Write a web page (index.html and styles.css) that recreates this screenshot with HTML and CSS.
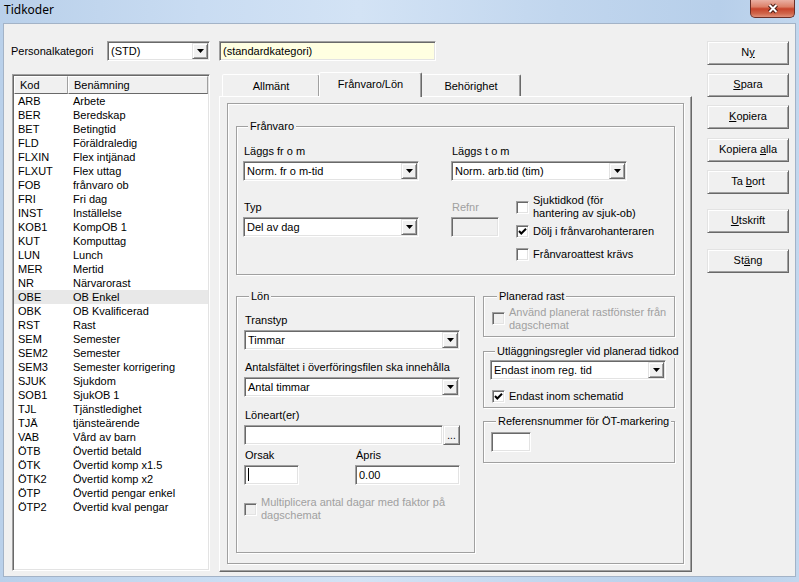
FILE: index.html
```html
<!DOCTYPE html>
<html lang="sv">
<head>
<meta charset="utf-8">
<title>Tidkoder</title>
<link rel="stylesheet" href="styles.css">
</head>
<body>
<div class="window">
  <div class="titlebar">
    <span class="title">Tidkoder</span>
    <div class="close">
      <svg width="14" height="11" viewBox="0 0 14 11"><path d="M3.5 2 L10.5 9 M10.5 2 L3.5 9" stroke="#4a1a12" stroke-width="4"/><path d="M3.5 2 L10.5 9 M10.5 2 L3.5 9" stroke="#fff" stroke-width="2"/></svg>
    </div>
  </div>
  <div class="client">
    <div class="toprow">
      <span class="plabel">Personalkategori</span>
      <div class="combo combo-std"><span class="val">(STD)</span><span class="drop"><svg width="7" height="4" viewBox="0 0 7 4"><polygon points="0,0 7,0 3.5,4" fill="#000"/></svg></span></div>
    </div>
    <div class="topmid"><div class="edit yellow">(standardkategori)</div></div>

    <div class="buttons">
      <div class="btn">N<u>y</u></div>
      <div class="btn"><u>S</u>para</div>
      <div class="btn"><u>K</u>opiera</div>
      <div class="btn btn-k2">Kopiera <u>a</u>lla</div>
      <div class="btn">Ta <u>b</u>ort</div>
      <div class="btn btn-u"><u>U</u>tskrift</div>
      <div class="btn btn-s">St<u>ä</u>ng</div>
    </div>

    <div class="listbox">
      <div class="lhead"><div class="hc hc-k">Kod</div><div class="hc hc-n">Benämning</div></div>
      <div class="lrow"><span class="k">ARB</span><span>Arbete</span></div>
      <div class="lrow"><span class="k">BER</span><span>Beredskap</span></div>
      <div class="lrow"><span class="k">BET</span><span>Betingtid</span></div>
      <div class="lrow"><span class="k">FLD</span><span>Föräldraledig</span></div>
      <div class="lrow"><span class="k">FLXIN</span><span>Flex intjänad</span></div>
      <div class="lrow"><span class="k">FLXUT</span><span>Flex uttag</span></div>
      <div class="lrow"><span class="k">FOB</span><span>frånvaro ob</span></div>
      <div class="lrow"><span class="k">FRI</span><span>Fri dag</span></div>
      <div class="lrow"><span class="k">INST</span><span>Inställelse</span></div>
      <div class="lrow"><span class="k">KOB1</span><span>KompOB 1</span></div>
      <div class="lrow"><span class="k">KUT</span><span>Komputtag</span></div>
      <div class="lrow"><span class="k">LUN</span><span>Lunch</span></div>
      <div class="lrow"><span class="k">MER</span><span>Mertid</span></div>
      <div class="lrow"><span class="k">NR</span><span>Närvarorast</span></div>
      <div class="lrow hot"><span class="k">OBE</span><span>OB Enkel</span></div>
      <div class="lrow"><span class="k">OBK</span><span>OB Kvalificerad</span></div>
      <div class="lrow"><span class="k">RST</span><span>Rast</span></div>
      <div class="lrow"><span class="k">SEM</span><span>Semester</span></div>
      <div class="lrow"><span class="k">SEM2</span><span>Semester</span></div>
      <div class="lrow"><span class="k">SEM3</span><span>Semester korrigering</span></div>
      <div class="lrow"><span class="k">SJUK</span><span>Sjukdom</span></div>
      <div class="lrow"><span class="k">SOB1</span><span>SjukOB 1</span></div>
      <div class="lrow"><span class="k">TJL</span><span>Tjänstledighet</span></div>
      <div class="lrow"><span class="k">TJÄ</span><span>tjänsteärende</span></div>
      <div class="lrow"><span class="k">VAB</span><span>Vård av barn</span></div>
      <div class="lrow"><span class="k">ÖTB</span><span>Övertid betald</span></div>
      <div class="lrow"><span class="k">ÖTK</span><span>Övertid komp x1.5</span></div>
      <div class="lrow"><span class="k">ÖTK2</span><span>Övertid komp x2</span></div>
      <div class="lrow"><span class="k">ÖTP</span><span>Övertid pengar enkel</span></div>
      <div class="lrow"><span class="k">ÖTP2</span><span>Övertid kval pengar</span></div>
    </div>

    <div class="tabs">
      <div class="tabstrip">
        <div class="tab tab-1">Allmänt</div>
        <div class="tab tab-active">Frånvaro/Lön</div>
        <div class="tab tab-3">Behörighet</div>
      </div>
      <div class="panel">
        <div class="inner">
          <div class="group g-franvaro">
            <div class="gtitle">Frånvaro</div>
            <div class="frow frow-a">
              <div class="fld w176">
                <div class="lbl">Läggs fr o m</div>
                <div class="combo"><span class="val">Norm. fr o m-tid</span><span class="drop"><svg width="7" height="4" viewBox="0 0 7 4"><polygon points="0,0 7,0 3.5,4" fill="#000"/></svg></span></div>
              </div>
              <div class="fld w176 ml32">
                <div class="lbl">Läggs t o m</div>
                <div class="combo"><span class="val">Norm. arb.tid (tim)</span><span class="drop"><svg width="7" height="4" viewBox="0 0 7 4"><polygon points="0,0 7,0 3.5,4" fill="#000"/></svg></span></div>
              </div>
            </div>
            <div class="frow frow-b">
              <div class="fld w176 mt7">
                <div class="lbl">Typ</div>
                <div class="combo"><span class="val">Del av dag</span><span class="drop"><svg width="7" height="4" viewBox="0 0 7 4"><polygon points="0,0 7,0 3.5,4" fill="#000"/></svg></span></div>
              </div>
              <div class="fld w48 ml32 mt7">
                <div class="lbl dis">Refnr</div>
                <div class="edit disabled"></div>
              </div>
              <div class="chkcol">
                <div class="chk two"><span class="box"></span><span class="ctext">Sjuktidkod (för<br>hantering av sjuk-ob)</span></div>
                <div class="chk c2"><span class="box"><svg width="9" height="9" viewBox="0 0 9 9"><path d="M1 4 L3.3 6.5 L8 1.8" stroke="#000" stroke-width="2" fill="none"/></svg></span><span class="ctext">Dölj i frånvarohanteraren</span></div>
                <div class="chk c3"><span class="box"></span><span class="ctext">Frånvaroattest krävs</span></div>
              </div>
            </div>
          </div>

          <div class="lower">
            <div class="group g-lon">
              <div class="gtitle">Lön</div>
              <div class="lbl l-trans">Transtyp</div>
              <div class="combo w216"><span class="val">Timmar</span><span class="drop"><svg width="7" height="4" viewBox="0 0 7 4"><polygon points="0,0 7,0 3.5,4" fill="#000"/></svg></span></div>
              <div class="lbl l-next">Antalsfältet i överföringsfilen ska innehålla</div>
              <div class="combo w216"><span class="val">Antal timmar</span><span class="drop"><svg width="7" height="4" viewBox="0 0 7 4"><polygon points="0,0 7,0 3.5,4" fill="#000"/></svg></span></div>
              <div class="lbl l-lone">Löneart(er)</div>
              <div class="lonerow"><div class="edit w199"></div><div class="dots">...</div></div>
              <div class="orow">
                <div class="fld w55"><div class="lbl">Orsak</div><div class="edit"><span class="caret"></span></div></div>
                <div class="fld w105 ml56"><div class="lbl">Ápris</div><div class="edit">0.00</div></div>
              </div>
              <div class="chk two dis c-mult"><span class="box"></span><span class="ctext">Multiplicera antal dagar med faktor på<br>dagschemat</span></div>
            </div>

            <div class="rcol">
              <div class="group g-rast">
                <div class="gtitle">Planerad rast</div>
                <div class="chk two dis c-rast"><span class="box"></span><span class="ctext">Använd planerat rastfönster från<br>dagschemat</span></div>
              </div>
              <div class="group g-utl">
                <div class="gtitle">Utläggningsregler vid planerad tidkod</div>
                <div class="combo w176 c-utl"><span class="val">Endast inom reg. tid</span><span class="drop"><svg width="7" height="4" viewBox="0 0 7 4"><polygon points="0,0 7,0 3.5,4" fill="#000"/></svg></span></div>
                <div class="chk c-sch"><span class="box"><svg width="9" height="9" viewBox="0 0 9 9"><path d="M1 4 L3.3 6.5 L8 1.8" stroke="#000" stroke-width="2" fill="none"/></svg></span><span class="ctext">Endast inom schematid</span></div>
              </div>
              <div class="group g-ref">
                <div class="gtitle">Referensnummer för ÖT-markering</div>
                <div class="edit w40 e-ref"></div>
              </div>
            </div>
          </div>
        </div>
      </div>
    </div>
  </div>
</div>
</body>
</html>
```

FILE: styles.css
```css
* { box-sizing: border-box; }
html, body { margin: 0; padding: 0; }
body {
  width: 799px;
  height: 582px;
  overflow: hidden;
  font-family: "Liberation Sans", Arial, sans-serif;
  font-size: 11px;
  color: #000;
  background: #bcd3ee;
}
.window {
  width: 799px;
  height: 582px;
  display: flex;
  flex-direction: column;
  background: linear-gradient(to right, #b9d0ea 0%, #c9dcf2 25%, #d3e3f5 45%, #c1d6ee 70%, #b7cfea 90%, #c2d7ee 100%);
}
.titlebar {
  flex: none;
  height: 23px;
  display: flex;
  align-items: flex-start;
}
.title {
  font-family: "Noto Sans", "Liberation Sans", sans-serif;
  font-size: 12px;
  line-height: 16px;
  margin: 2px 0 0 4px;
}
.close {
  margin-left: auto;
  margin-right: 4px;
  width: 45px;
  height: 18px;
  border: 1px solid #6b2f27;
  border-top: none;
  border-radius: 0 0 5px 5px;
  background: linear-gradient(#eab0a3 0%, #dc8068 40%, #c7442b 52%, #d0664b 80%, #e0907a 100%);
  display: flex;
  align-items: center;
  justify-content: center;
}
.client {
  flex: none;
  height: 554px;
  margin: 0 3px;
  background: #f0f0f0;
  border: 1px solid #a3b3c7;
  padding: 17px 0 0 7px;
  display: grid;
  grid-template-columns: 208px 488px 82px;
  grid-template-rows: 20px 500px;
  row-gap: 11px;
}

/* sunken / raised primitives */
.combo, .edit, .listbox, .box {
  border: 1px solid;
  border-color: #a0a0a0 #fff #fff #a0a0a0;
  box-shadow: inset 1px 1px 0 #696969, inset -1px -1px 0 #e3e3e3;
  background: #fff;
}
.btn, .drop, .dots {
  border: 1px solid;
  border-color: #e3e3e3 #696969 #696969 #e3e3e3;
  box-shadow: inset 1px 1px 0 #fff, inset -1px -1px 0 #a0a0a0;
  background: #f0f0f0;
}

/* top row */
.toprow {
  grid-column: 1;
  grid-row: 1;
  display: flex;
  align-items: center;
  justify-content: space-between;
  padding-right: 9px;
}
.plabel { line-height: 13px; }
.combo {
  height: 20px;
  display: flex;
  padding: 1px;
}
.combo .val {
  flex: 1;
  padding-left: 2px;
  line-height: 16px;
  white-space: nowrap;
  overflow: hidden;
}
.drop {
  flex: none;
  width: 16px;
  height: 16px;
  display: flex;
  align-items: center;
  justify-content: center;
}
.combo-std { width: 103px; }
.topmid { grid-column: 2; grid-row: 1; }
.edit {
  height: 20px;
  padding: 1px 3px;
  line-height: 16px;
  white-space: nowrap;
}
.yellow { width: 217px; background: #ffffe1; }
.edit.disabled { background: #f0f0f0; }

/* buttons */
.buttons {
  grid-column: 3;
  grid-row: 1 / span 2;
  display: flex;
  flex-direction: column;
  gap: 8px;
}
.btn {
  width: 82px;
  height: 24px;
  text-align: center;
  line-height: 21px;
}
.btn-k2 { margin-top: 1px; }
.btn-u { margin-top: 7px; }
.btn-s { margin-top: 8px; }

/* list */
.listbox {
  grid-column: 1;
  grid-row: 2;
  margin: 2px 0 0 1px;
  width: 198px;
  height: 497px;
  padding: 1px;
  overflow: hidden;
}
.lhead { display: flex; height: 18px; }
.hc {
  height: 18px;
  border: 1px solid;
  border-color: #fff #a0a0a0 #696969 #fff;
  background: #f0f0f0;
  padding-left: 5px;
  line-height: 16px;
}
.hc-k { width: 54px; }
.hc-n { flex: 1; }
.lrow {
  display: flex;
  height: 14px;
  line-height: 14px;
  white-space: nowrap;
}
.lrow .k { width: 59px; padding-left: 4px; flex: none; }
.lrow.hot { background: #e8e8e8; }

/* tabs */
.tabs {
  grid-column: 2;
  grid-row: 2;
  width: 473px;
  display: flex;
  flex-direction: column;
}
.tabstrip {
  height: 24px;
  display: flex;
  align-items: flex-end;
  padding-left: 3px;
}
.tab {
  height: 22px;
  border: 1px solid;
  border-bottom: none;
  border-color: #fff #696969 transparent #fff;
  border-radius: 2px 2px 0 0;
  box-shadow: inset -1px 0 0 #a0a0a0;
  background: #f0f0f0;
  text-align: center;
  padding-top: 5px;
  line-height: 13px;
}
.tab-1 { width: 98px; }
.tab-active {
  width: 103px;
  height: 25px;
  margin: 0 0 -1px -1px;
  position: relative;
  z-index: 2;
}
.tab-3 { width: 100px; margin-left: -1px; }
.panel {
  height: 476px;
  border: 1px solid;
  border-color: #fff #696969 #696969 #fff;
  box-shadow: inset -1px -1px 0 #a0a0a0;
  padding: 6px 0 0 7px;
}
.inner {
  width: 457px;
  height: 461px;
  border: 1px solid #a0a0a0;
  box-shadow: 1px 1px 0 #fff, inset 1px 1px 0 #fff;
  padding: 22px 0 0 8px;
}

/* group boxes */
.group {
  border: 1px solid #a0a0a0;
  box-shadow: 1px 1px 0 #fff, inset 1px 1px 0 #fff;
}
.gtitle {
  width: max-content;
  margin: -7px 0 0 5px;
  padding: 0 2px;
  line-height: 13px;
  height: 13px;
  background: #f0f0f0;
  white-space: nowrap;
}
.lbl { line-height: 13px; padding-left: 1px; margin-bottom: 3px; white-space: nowrap; }
.dis, .chk.dis .ctext { color: #a0a0a0; }
.fld { flex: none; }
.w176 { width: 176px; }
.w48 { width: 48px; }
.w55 { width: 55px; }
.w105 { width: 105px; }
.w216 { width: 216px; }
.w199 { width: 199px; }
.w40 { width: 40px; }
.ml32 { margin-left: 32px; }
.ml56 { margin-left: 56px; }
.mt7 { margin-top: 7px; }

.g-franvaro {
  width: 439px;
  height: 149px;
  padding-left: 6px;
}
.frow { display: flex; align-items: flex-start; }
.frow-a { margin-top: 12px; }
.frow-b { margin-top: 13px; }
.chkcol { margin-left: 17px; display: flex; flex-direction: column; }

.chk {
  display: flex;
  align-items: flex-start;
  gap: 4px;
  white-space: nowrap;
}
.chk .box {
  flex: none;
  width: 13px;
  height: 13px;
  display: flex;
  align-items: center;
  justify-content: center;
}
.chk.dis .box { background: #f0f0f0; }
.ctext { line-height: 13px; }
.chk.two .box { margin-top: 7px; }
.chk.c2 { margin-top: 5px; }
.chk.c3 { margin-top: 10px; }

.lower { display: flex; align-items: flex-start; margin-top: 21px; }
.g-lon {
  width: 239px;
  height: 257px;
  padding-left: 7px;
  flex: none;
}
.l-trans { margin-top: 11px; }
.l-next { margin-top: 11px; }
.l-lone { margin-top: 12px; }
.lonerow { display: flex; }
.dots {
  width: 17px;
  height: 20px;
  text-align: center;
  line-height: 14px;
  padding-top: 3px;
  font-size: 10px;
}
.orow { display: flex; margin-top: 4px; }
.caret { display: inline-block; width: 1px; height: 13px; background: #000; vertical-align: -2px; }
.c-mult { margin-top: 11px; }

.rcol {
  margin-left: 8px;
  width: 192px;
  display: flex;
  flex-direction: column;
}
.g-rast { height: 41px; padding-left: 8px; }
.c-rast { margin-top: 3px; }
.chk.c-rast .box { margin-top: 6px; }
.g-utl { height: 57px; margin-top: 14px; padding-left: 6px; }
.c-utl { margin-top: 2px; }
.c-sch { margin-top: 10px; margin-left: 2px; }
.g-ref { height: 42px; margin-top: 13px; padding-left: 7px; }
.e-ref { margin-top: 4px; }
```
